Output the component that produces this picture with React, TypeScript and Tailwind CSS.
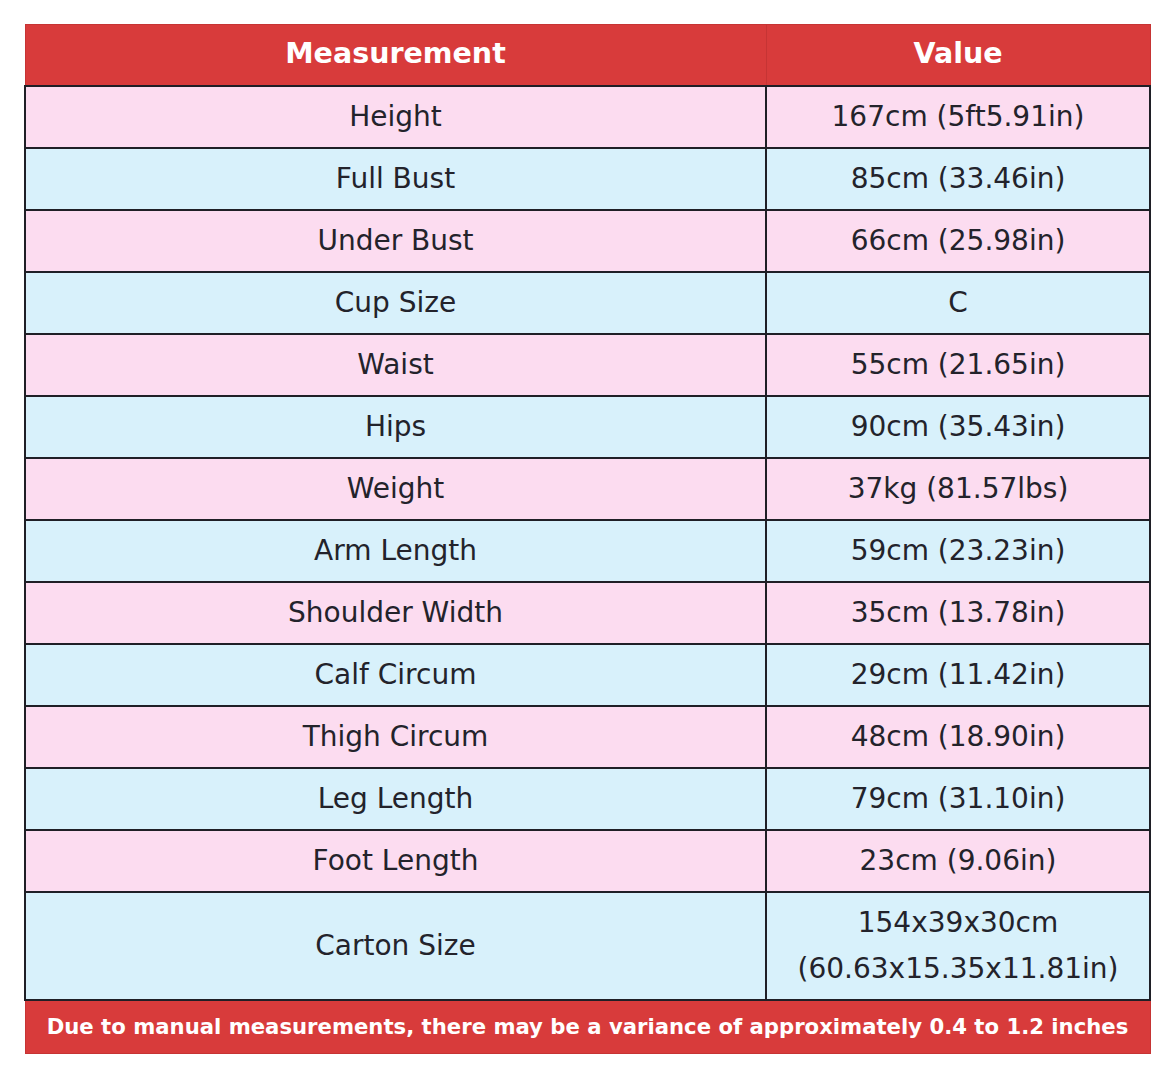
const rows: [string, string][] = [
  ['Height', '167cm (5ft5.91in)'],
  ['Full Bust', '85cm (33.46in)'],
  ['Under Bust', '66cm (25.98in)'],
  ['Cup Size', 'C'],
  ['Waist', '55cm (21.65in)'],
  ['Hips', '90cm (35.43in)'],
  ['Weight', '37kg (81.57lbs)'],
  ['Arm Length', '59cm (23.23in)'],
  ['Shoulder Width', '35cm (13.78in)'],
  ['Calf Circum', '29cm (11.42in)'],
  ['Thigh Circum', '48cm (18.90in)'],
  ['Leg Length', '79cm (31.10in)'],
  ['Foot Length', '23cm (9.06in)'],
];

export default function App() {
  return (
    <div className="bg-white w-[1174px] h-[1078px] pt-[24px] pl-[24px] font-['DejaVu_Sans',sans-serif]">
      <table className="w-[1125px] border-collapse table-fixed">
        <colgroup>
          <col className="w-[741px]" />
          <col className="w-[384px]" />
        </colgroup>
        <thead>
          <tr className="h-[61px] bg-[#d83b3b] text-white">
            <th className="border border-[#c63434] text-[28.5px] font-bold">Measurement</th>
            <th className="border border-[#c63434] text-[28.5px] font-bold">Value</th>
          </tr>
        </thead>
        <tbody className="text-[28px] text-[#23232b]">
          {rows.map(([k, v], i) => (
            <tr key={k} className={`h-[62px] ${i % 2 === 0 ? 'bg-[#fcdcf0]' : 'bg-[#d8f1fb]'}`}>
              <td className="border-2 border-[#1f1f26] text-center">{k}</td>
              <td className="border-2 border-[#1f1f26] text-center">{v}</td>
            </tr>
          ))}
          <tr className="h-[108px] bg-[#d8f1fb]">
            <td className="border-2 border-[#1f1f26] text-center">Carton Size</td>
            <td className="border-2 border-[#1f1f26] text-center leading-[46px]">
              154x39x30cm
              <br />
              (60.63x15.35x11.81in)
            </td>
          </tr>
          <tr className="h-[54px] bg-[#d83b3b]">
            <td colSpan={2} className="border border-[#c63434] text-center text-white text-[21.2px] font-bold">
              Due to manual measurements, there may be a variance of approximately 0.4 to 1.2 inches
            </td>
          </tr>
        </tbody>
      </table>
    </div>
  );
}
